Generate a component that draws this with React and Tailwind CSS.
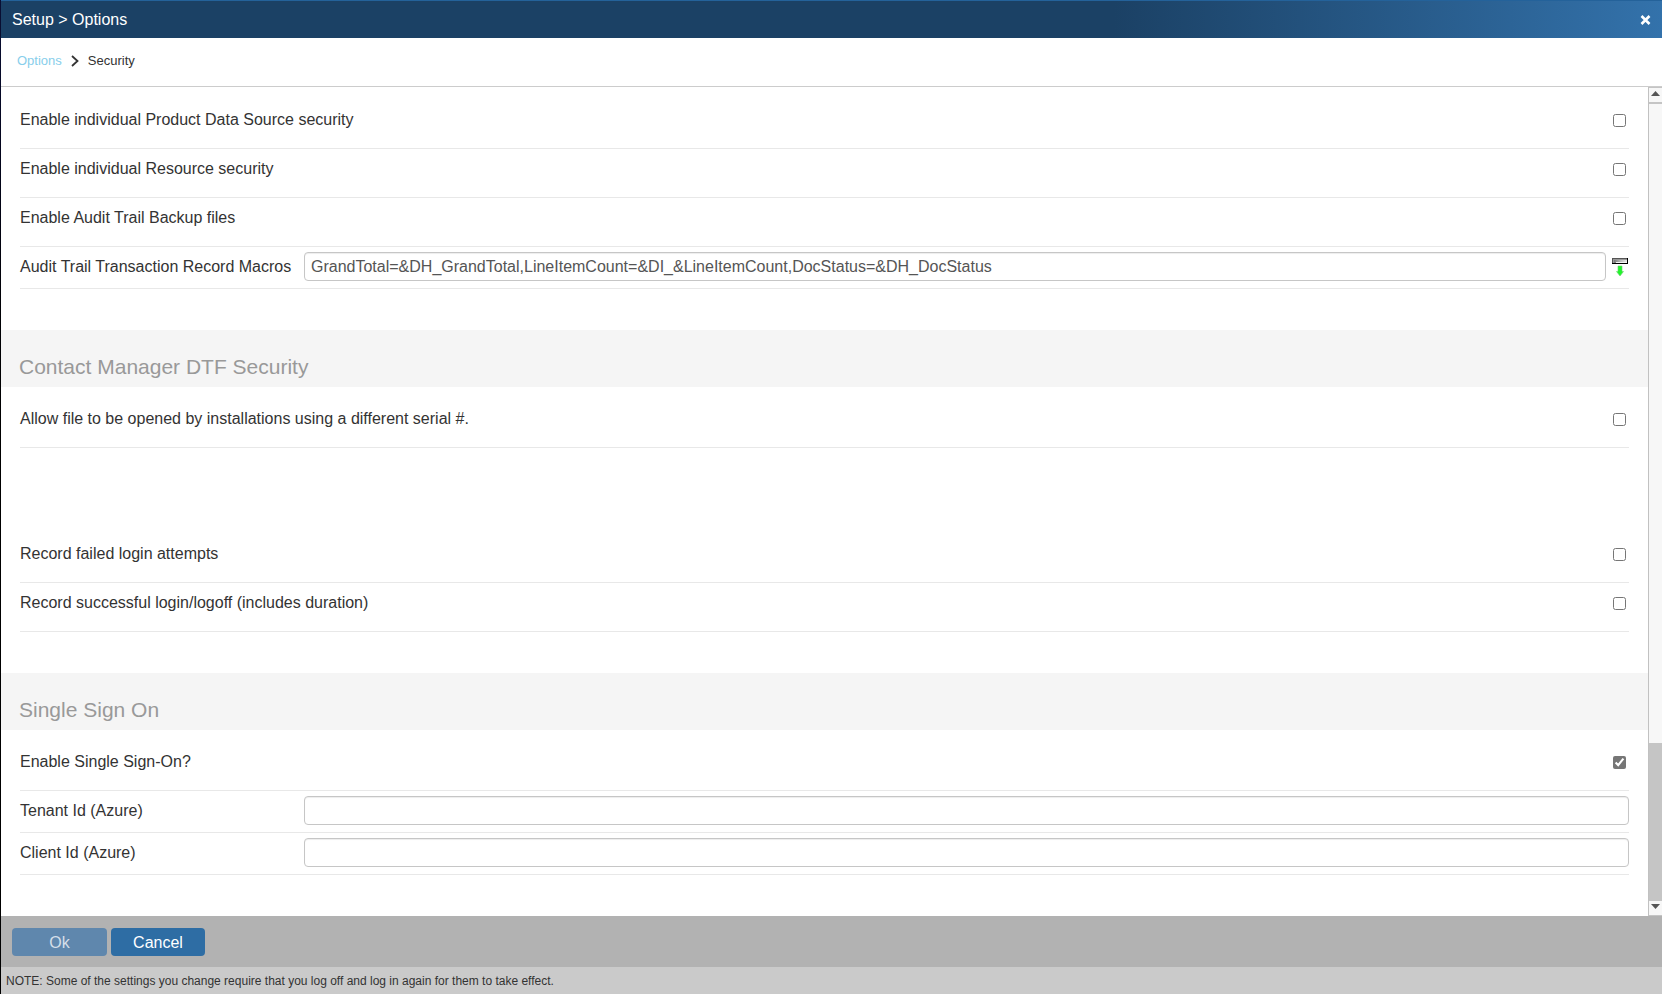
import { useState } from "react";

function CheckRow({ id, label, defaultChecked = false }) {
  return (
    <div className="flex h-[49px] items-start justify-between border-b border-[#e8e8e8] pt-[10px] pr-[3px]">
      <label htmlFor={id} className="leading-5">{label}</label>
      <input id={id} type="checkbox" defaultChecked={defaultChecked} className="mt-1 h-[13px] w-[13px] accent-[#767676]" />
    </div>
  );
}

function TextRow({ id, label, defaultValue = "", children }) {
  return (
    <div className="flex h-[42px] items-start border-b border-[#e8e8e8] pt-[5px]">
      <label htmlFor={id} className="w-[284px] shrink-0 pt-[5px] leading-5">{label}</label>
      <input
        id={id}
        type="text"
        defaultValue={defaultValue}
        className="h-[29px] min-w-0 flex-1 rounded border border-[#c6c6c6] bg-white px-1.5 text-[#555] shadow-[inset_0_1px_1px_rgba(0,0,0,0.075)] outline-none"
      />
      {children}
    </div>
  );
}

function SectionTitle({ children }) {
  return (
    <h2 className="mt-[41px] flex h-[57px] items-end bg-[#f5f5f5] pb-[6px] pl-[18px] text-[21px] leading-7 text-[#999]">
      {children}
    </h2>
  );
}

function InsertMacroIcon() {
  return (
    <svg width="16" height="18" viewBox="0 0 16 18">
      <defs>
        <linearGradient id="bar" x1="0" x2="1">
          <stop offset="0" stopColor="#777" />
          <stop offset=".5" stopColor="#bbb" />
          <stop offset="1" stopColor="#e8e8e8" />
        </linearGradient>
      </defs>
      <path d="M0 0h16v6H0z" fill="#000" />
      <path d="M0 0h15v1H0zM0 0h1v5H0z" fill="#555" />
      <path d="M1 1h14v4H1z" fill="#999" />
      <path d="M2 2h13v3H2z" fill="url(#bar)" />
      <path d="M4 4h11v1H4z" fill="#f4f4f4" />
      <path d="M6 8h4v5.5h1.5L8 18l-3.5-4.5H6z" fill="#20f52a" stroke="#6bd070" strokeWidth=".6" />
    </svg>
  );
}

function Scrollbar() {
  return (
    <div className="flex w-[14px] shrink-0 flex-col border-l border-[#c1c1c1] bg-[#f7f7f7]">
      <button aria-label="Scroll up" className="flex h-[17px] items-center justify-center border-t border-b-2 border-[#c4c4c4] pb-[3px]">
        <svg width="9" height="5" viewBox="0 0 9 5"><path d="M4.5 0 9 5H0z" fill="#555" /></svg>
      </button>
      <div className="flex flex-1 flex-col justify-end">
        <div className="h-[158px] bg-[#c5c5c5]" />
      </div>
      <button aria-label="Scroll down" className="flex h-[15px] items-center justify-center border-b border-[#c4c4c4] pb-[3px]">
        <svg width="9" height="5" viewBox="0 0 9 5"><path d="M0 0h9L4.5 5z" fill="#555" /></svg>
      </button>
    </div>
  );
}

export default function App() {
  const [open, setOpen] = useState(true);

  if (!open) return null;

  return (
    <div className="flex min-h-screen bg-white font-['Liberation_Sans',Arial,sans-serif] text-base text-[#333]">
      <div className="w-px shrink-0 bg-linear-to-b from-[#0a0f35] via-[#000] to-[#000]" />
      <div className="flex min-w-0 flex-1 flex-col">
        <header className="flex h-[38px] items-center justify-between border-t border-[#24629a] bg-linear-to-r from-[#1b4165] from-67% to-[#3372ab] pr-[11px] pl-[11px] text-white">
          <h1 className="leading-5">Setup &gt; Options</h1>
          <button aria-label="Close" onClick={() => setOpen(false)}>
            <svg width="11" height="10" viewBox="0 0 11 10">
              <path d="M1.5 1 9.5 9M9.5 1 1.5 9" stroke="#fff" strokeWidth="2.6" />
            </svg>
          </button>
        </header>

        <nav aria-label="Breadcrumb" className="flex h-[49px] items-center border-b border-[#ccc] pb-[3px] pl-4 text-[13px]">
          <a href="#options" className="text-[#87ceeb]">Options</a>
          <svg width="8" height="12" viewBox="0 0 8 12" className="mx-[9px]">
            <path d="M1 1l5.5 5L1 11" fill="none" stroke="#333" strokeWidth="1.8" />
          </svg>
          <span>Security</span>
        </nav>

        <div className="flex flex-1">
          <main className="min-w-0 flex-1 pb-[41px]">
            <section className="px-[19px] pt-[13px]">
              <CheckRow id="product-security" label="Enable individual Product Data Source security" />
              <CheckRow id="resource-security" label="Enable individual Resource security" />
              <CheckRow id="audit-backup" label="Enable Audit Trail Backup files" />
              <TextRow
                id="audit-macros"
                label="Audit Trail Transaction Record Macros"
                defaultValue="GrandTotal=&DH_GrandTotal,LineItemCount=&DI_&LineItemCount,DocStatus=&DH_DocStatus"
              >
                <button aria-label="Insert macro" className="mt-[6px] mr-px ml-[6px]">
                  <InsertMacroIcon />
                </button>
              </TextRow>
            </section>

            <SectionTitle>Contact Manager DTF Security</SectionTitle>
            <section className="px-[19px] pt-3">
              <CheckRow id="different-serial" label="Allow file to be opened by installations using a different serial #." />
            </section>

            <section className="mt-[86px] px-[19px]">
              <CheckRow id="failed-login" label="Record failed login attempts" />
              <CheckRow id="successful-login" label="Record successful login/logoff (includes duration)" />
            </section>

            <SectionTitle>Single Sign On</SectionTitle>
            <section className="px-[19px] pt-3">
              <CheckRow id="enable-sso" label="Enable Single Sign-On?" defaultChecked />
              <TextRow id="tenant-id" label="Tenant Id (Azure)" />
              <TextRow id="client-id" label="Client Id (Azure)" />
            </section>
          </main>
          <Scrollbar />
        </div>

        <footer>
          <div className="flex h-[51px] gap-1 bg-[#b2b2b2] pt-3 pl-[11px] text-white">
            <button disabled className="h-7 w-[95px] rounded bg-[#5f87ad] pt-0.5 text-[#d5dfe9]">Ok</button>
            <button onClick={() => setOpen(false)} className="h-7 w-[94px] rounded bg-[#2e6da4] pt-0.5">Cancel</button>
          </div>
          <p className="h-[27px] bg-[#cacaca] pl-[5px] text-xs leading-7">
            NOTE: Some of the settings you change require that you log off and log in again for them to take effect.
          </p>
        </footer>
      </div>
    </div>
  );
}
